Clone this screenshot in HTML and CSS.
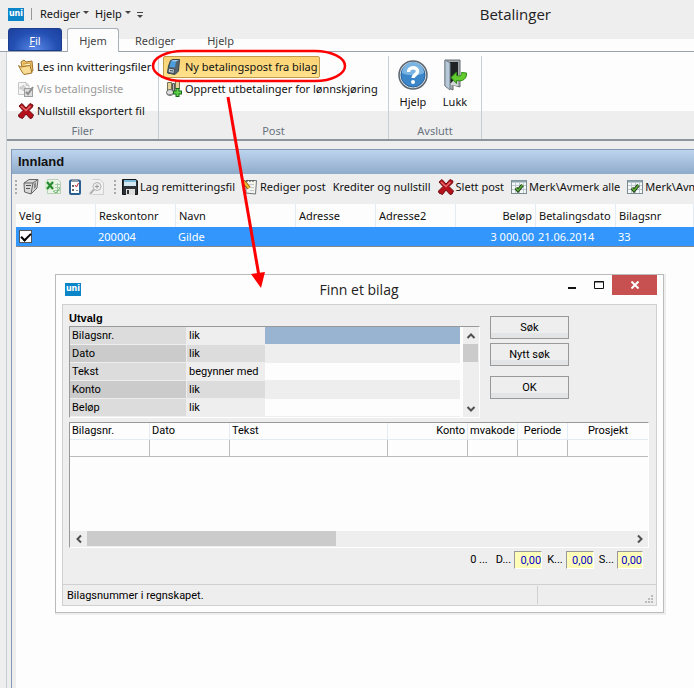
FILE: index.html
```
<!DOCTYPE html>
<html lang="no">
<head>
  <meta charset="UTF-8" />
  <meta name="viewport" content="width=device-width, initial-scale=1.0" />
  <title>Betalinger</title>
  <link rel="stylesheet" href="styles.css">
</head>
<body>

  <svg class="symbols" width="0" height="0" aria-hidden="true">
    <symbol id="cross" viewBox="0 0 16 16">
      <path d="M1 3 L4 0.500 L8 5 L12 0.500 L15 2 L14.500 4 L11 7.500 L15.500 12 L14 15 L12 15.500 L8 11 L4.500 15.500 L1 14 L0.500 12 L5 7.500 Z" fill="#b5121b" stroke="#6d0d12" />
      <path d="M3 3 L8 7.500 L12.500 3" fill="none" stroke="#e4696d" stroke-width="1.500" />
    </symbol>
    <symbol id="checkgrid" viewBox="0 0 16 14">
      <rect x="0.500" y="0.500" width="15" height="13" fill="#f6f8f8" stroke="#7d8c90" />
      <path d="M1 1.500H15" stroke="#8aa3ad" stroke-width="2" />
      <path d="M4.500 3V13M8.500 3V13M12.500 3V13M1 5.500H15M1 9.500H15" stroke="#b9c9cf" />
      <path d="M5 8 L7 10.500 L11.500 5" fill="none" stroke="#1d3a14" stroke-width="3.500" />
      <path d="M5 8 L7 10.500 L11.500 5" fill="none" stroke="#5fae3a" stroke-width="1.500" />
    </symbol>
  </svg>

  <header class="titlebar">
    <span class="logo">uni</span>
    <nav class="quick">
      <button>Rediger <i class="caret"></i></button>
      <button>Hjelp <i class="caret"></i></button>
      <button aria-label="Tilpass"><i class="caret more"></i></button>
    </nav>
    <h1>Betalinger</h1>
  </header>

  <nav class="tabs">
    <button class="tab file"><u>F</u>il</button>
    <button class="tab active">Hjem</button>
    <button class="tab">Rediger</button>
    <button class="tab">Hjelp</button>
  </nav>

  <main class="window">
    <div class="ribbon">
      <section class="group filer">
        <div class="tools">
          <button class="tool">
            <svg width="16" height="16" viewBox="0 0 16 16"><path d="M3 3 L6 1 L8 3 L14 2 L15 12 L5 13 Z" fill="#f0c469" stroke="#a0752b" /><path d="M5 5 L12 4 L13 7" fill="#fff4cf" stroke="#c99a42" /><path d="M0.500 6.500 L3 8 L12 6.500 L14 14 L6 15.500 L4 13 Z" fill="#f9dc93" stroke="#a0752b" /></svg>
            Les inn kvitteringsfiler
          </button>
          <button class="tool" disabled>
            <svg width="16" height="16" viewBox="0 0 16 16"><path d="M0.500 1.500H8L11 4.500V13.500H0.500Z" fill="#f5f5f5" stroke="#c6c6c6" /><path d="M8 1.500V4.500H11M5 4L8 7L5 10V8H2V6H5Z" fill="#d8d8d8" stroke="#c6c6c6" /><rect x="6.500" y="7.500" width="8" height="8" fill="#dcdcdc" stroke="#9d9d9d" /><path d="M8 11L10 13L15 6" fill="none" stroke="#8d8d8d" stroke-width="2" /></svg>
            Vis betalingsliste
          </button>
          <button class="tool">
            <svg width="16" height="16"><use href="#cross" /></svg>
            Nullstill eksportert fil
          </button>
        </div>
        <h2>Filer</h2>
      </section>

      <section class="group post">
        <div class="tools">
          <button class="tool selected">
            <svg width="16" height="16" viewBox="0 0 16 16"><path d="M4.500 1.500L7 0.500H13.500L12.500 12L9 15.500L1.500 14L2.500 7Z" fill="#55636e" stroke="#37434d" /><path d="M5 2H10L9 8.500L3.500 8Z" fill="#4a9fdc" /><path d="M5 2L7 1H13L10 2.500Z" fill="#a9cde8" /><path d="M2.500 9L8.500 10L8 14.500L2 13.500Z" fill="#c3ccd2" stroke="#3c4a55" /><path d="M4 11.500L7 12" stroke="#3c4a55" /></svg>
            Ny betalingspost fra bilag
          </button>
          <button class="tool">
            <svg width="16" height="16" viewBox="0 0 16 16"><path d="M1.500 1.500H5.500V10H1.500ZM9.500 0.500H13.500V8H9.500Z" fill="#e5d59a" stroke="#77704f" /><path d="M6.500 2.500H8.500V11H6.500Z" fill="#b9b9b9" stroke="#555" /><ellipse cx="4" cy="11.500" rx="3.500" ry="3" fill="#dedede" stroke="#666" /><path d="M1 12.500C2 14 6 14 7 12.500" fill="none" stroke="#888" /><path d="M11.500 7V16M7 11.500H16" stroke="#16691a" stroke-width="4" /><path d="M11.500 8V15M8 11.500H15" stroke="#5ed14b" stroke-width="2" /></svg>
            Opprett utbetalinger for lønnskjøring
          </button>
        </div>
        <h2>Post</h2>
      </section>

      <section class="group avslutt">
        <div class="tools large">
          <button class="tool">
            <svg width="32" height="32" viewBox="0 0 32 32"><circle cx="16" cy="16" r="14" fill="#d7dde2" stroke="#5d666e" stroke-width="1.500" /><circle cx="16" cy="16" r="12" fill="#3a86c8" stroke="#2b659c" /><path d="M5 14A11 11 0 0 1 27 14C21 17 11 17 5 14Z" fill="#79b4e2" /><path d="M11.500 13C11.500 7.500 20.500 7.500 20.500 12.500C20.500 16 16 15.500 16 19" fill="none" stroke="#fff" stroke-width="3.500" /><circle cx="16" cy="23" r="2" fill="#fff" /></svg>
            Hjelp
          </button>
          <button class="tool">
            <svg width="32" height="32" viewBox="0 0 32 32"><path d="M6 1H21V28L14 26V31L6 27Z" fill="#a4a9ad" stroke="#666c71" /><path d="M11 3H19V24H11Z" fill="#202326" /><path d="M12 24L19 17V27L12 26Z" fill="#d3d6d8" /><path d="M6 1L11 4V31L6 27Z" fill="#b7c9d8" stroke="#74818c" /><path d="M12 18.500L17.500 13V16.500C20 17.500 23 17 22.500 13.500L27.500 14C28 19.500 24 23 17.500 21.500V24.500Z" fill="#62c92e" stroke="#2e8b13" /></svg>
            Lukk
          </button>
        </div>
        <h2>Avslutt</h2>
      </section>
    </div>

    <section class="panel">
      <h2 class="panel-title">Innland</h2>

      <div class="toolbar">
        <i class="grip"></i>
        <button class="tbtn icon" aria-label="Skriv ut"><svg width="16" height="16" viewBox="0 0 16 16"><path d="M1 4L6 0.500H15L14 9L8 15L1.500 13Z" fill="#d8d8d8" stroke="#666" /><path d="M1 4H10L15 0.500M10 4L8 15" fill="none" stroke="#666" /><path d="M3 6.500H8M3 9.500H7" stroke="#555" /><path d="M11 5L13 3V8L11 10Z" fill="#888" /></svg></button>
        <button class="tbtn icon" aria-label="Excel"><svg width="16" height="16" viewBox="0 0 16 16"><path d="M2.500 0.500H13L15.500 3V14.500H2.500Z" fill="#eaf5e8" stroke="#b5d0b5" /><path d="M10 5.500H15M10 8.500H15M9 11.500H15M12.500 4V14" stroke="#a5cda5" /><rect x="0" y="2" width="9" height="9" fill="#d4ecd0" /><path d="M2 3L8 10M8 3L2 10" stroke="#23872b" stroke-width="2" /><path d="M8 12L11 14L15 9" fill="none" stroke="#63b263" /></svg></button>
        <button class="tbtn icon" aria-label="Liste"><svg width="16" height="16" viewBox="0 0 16 16"><rect x="3" y="1.500" width="10" height="13.500" rx="1" fill="#fff" stroke="#2a6093" stroke-width="2" /><rect x="5" y="0" width="6" height="3" fill="#8b9ca8" /><path d="M5 7H7M5 11H7" stroke="#666" stroke-width="2" /><path d="M8 6L9.500 8L11.500 4" fill="none" stroke="#b52626" /><path d="M9 11.500H11" stroke="#888" /></svg></button>
        <button class="tbtn icon" aria-label="Forhåndsvis"><svg width="16" height="16" viewBox="0 0 16 16"><path d="M3.500 0.500H11L14.500 4V15.500H3.500" fill="#f1f1f1" stroke="#cfcfcf" /><circle cx="8" cy="7.500" r="4" fill="#eee" stroke="#b2b2b2" /><path d="M8 5.500V9.500M6 7.500H10" stroke="#999" /><path d="M5 10.500L1 15" stroke="#b2b2b2" stroke-width="2" /></svg></button>
        <i class="grip second"></i>
        <button class="tbtn"><svg width="16" height="16" viewBox="0 0 16 16"><path d="M0.500 0.500H14L15.500 2V15.500H0.500Z" fill="#2d3136" stroke="#15181b" /><rect x="2" y="1" width="12" height="6" fill="#d5e7f1" /><path d="M2 2H14" stroke="#79bada" stroke-width="2" /><rect x="4" y="10" width="9" height="6" fill="#e0e0e0" /><rect x="5" y="11" width="2" height="4" fill="#333" /></svg>Lag remitteringsfil</button>
        <button class="tbtn gap"><svg width="16" height="16" viewBox="0 0 16 16"><path d="M4 1.500H14.500L13.500 15L4 14Z" fill="#f4f4ec" stroke="#6d7478" /><path d="M5 1V3M8 1V3M11 1V3" stroke="#444" /><path d="M7 5.500H12M8 8.500H12M8 11.500H12" stroke="#c3c9cc" /><path d="M1 2L7 9" stroke="#8a6414" stroke-width="4" /><path d="M1 2L7 9" stroke="#f4bd32" stroke-width="2" /></svg>Rediger post</button>
        <button class="tbtn gap">Krediter og nullstill</button>
        <button class="tbtn gap"><svg width="16" height="16"><use href="#cross" /></svg>Slett post</button>
        <button class="tbtn gap"><svg width="16" height="14"><use href="#checkgrid" /></svg>Merk\Avmerk alle</button>
        <button class="tbtn gap"><svg width="16" height="14"><use href="#checkgrid" /></svg>Merk\Avmerk</button>
      </div>

      <div class="list">
        <table class="payments">
          <colgroup>
            <col class="w80"><col class="w80"><col class="w120"><col class="w80"><col class="w80"><col class="w80"><col class="w80"><col>
          </colgroup>
          <thead>
            <tr><th>Velg</th><th>Reskontonr</th><th>Navn</th><th>Adresse</th><th>Adresse2</th><th class="num">Beløp</th><th>Betalingsdato</th><th>Bilagsnr</th></tr>
          </thead>
          <tbody>
            <tr><td><input type="checkbox" aria-label="Velg" checked></td><td>200004</td><td>Gilde</td><td></td><td></td><td class="num">3 000,00</td><td>21.06.2014</td><td>33</td></tr>
          </tbody>
        </table>
      </div>
    </section>
  </main>

  <div class="dialog" role="dialog" aria-labelledby="dialogTitle">
    <div class="dialog-bar">
      <span class="logo">uni</span>
      <h2 id="dialogTitle">Finn et bilag</h2>
      <div class="winbtns">
        <button aria-label="Minimer"><svg width="12" height="12" viewBox="0 0 12 12"><path d="M2 9H10" stroke="#111" stroke-width="2" /></svg></button>
        <button aria-label="Maksimer"><svg width="12" height="12" viewBox="0 0 12 12"><path d="M1.500 2.500H10.500V9.500H1.500Z M1 3H11" fill="none" stroke="#111" /></svg></button>
        <button class="close" aria-label="Lukk"><svg width="8" height="8" viewBox="0 0 8 8"><path d="M0.500 0.500L7.500 7.500M7.500 0.500L0.500 7.500" stroke="#fff" stroke-width="2" /></svg></button>
      </div>
    </div>

    <div class="dialog-body">
      <div class="search">
        <div class="criteria">
          <h3>Utvalg</h3>
          <div class="criteria-box">
            <table class="filters">
              <tr><th><label for="bilagsnr">Bilagsnr.</label></th><td>lik</td><td><input id="bilagsnr" class="current"></td></tr>
              <tr><th><label for="dato">Dato</label></th><td>lik</td><td><input id="dato"></td></tr>
              <tr><th><label for="tekst">Tekst</label></th><td>begynner med</td><td><input id="tekst"></td></tr>
              <tr><th><label for="konto">Konto</label></th><td>lik</td><td><input id="konto"></td></tr>
              <tr><th><label for="belop">Beløp</label></th><td>lik</td><td><input id="belop"></td></tr>
            </table>
            <div class="scroll vertical">
              <button aria-label="Opp"><svg width="10" height="8" viewBox="0 0 10 8"><path d="M1.500 6L5 2.500L8.500 6" /></svg></button>
              <i class="thumb"></i>
              <button aria-label="Ned"><svg width="10" height="8" viewBox="0 0 10 8"><path d="M1.500 2L5 5.500L8.500 2" /></svg></button>
            </div>
          </div>
        </div>
        <div class="actions">
          <button>Søk</button>
          <button>Nytt søk</button>
          <button class="ok">OK</button>
        </div>
      </div>

      <div class="hits">
        <table>
          <colgroup>
            <col class="w80"><col class="w80"><col><col class="w80"><col class="w50"><col class="w50"><col class="w80">
          </colgroup>
          <thead>
            <tr><th>Bilagsnr.</th><th>Dato</th><th>Tekst</th><th class="num">Konto</th><th class="mid">mvakode</th><th class="mid">Periode</th><th class="mid">Prosjekt</th></tr>
          </thead>
          <tbody>
            <tr><td></td><td></td><td></td><td></td><td></td><td></td><td></td></tr>
          </tbody>
        </table>
        <div class="scroll horizontal">
          <button aria-label="Venstre"><svg width="8" height="10" viewBox="0 0 8 10"><path d="M6 1.500L2.500 5L6 8.500" /></svg></button>
          <i class="thumb"></i>
          <button aria-label="Høyre"><svg width="8" height="10" viewBox="0 0 8 10"><path d="M2 1.500L5.500 5L2 8.500" /></svg></button>
        </div>
      </div>

      <div class="sums">
        <span>0 ...</span>
        <label for="debet">D...</label><input id="debet" value="0,00" readonly>
        <label for="kredit">K...</label><input id="kredit" value="0,00" readonly>
        <label for="saldo">S...</label><input id="saldo" class="small" value="0,00" readonly>
      </div>

      <footer class="status">
        <span>Bilagsnummer i regnskapet.</span>
        <span class="corner"><svg width="9" height="9" viewBox="0 0 9 9" fill="#bbb"><path d="M6 0h2v2h-2zM3 3h2v2h-2zM6 3h2v2h-2zM0 6h2v2h-2zM3 6h2v2h-2zM6 6h2v2h-2z" /></svg></span>
      </footer>
    </div>
  </div>

  <svg class="marker" width="240" height="250" viewBox="0 0 240 250" aria-hidden="true">
    <rect x="43" y="11" width="192" height="30" rx="30" ry="15" fill="none" stroke="#f00" stroke-width="2.500" />
    <path d="M118 57L149 236" stroke="#f00" stroke-width="3" />
    <path d="M141 234L155 232L151 248Z" fill="#f00" />
  </svg>

</body>
</html>
```

FILE: styles.css
```
* {
  box-sizing: border-box;
}

body {
  margin: 0;
  min-height: 100vh;
  display: flex;
  flex-direction: column;
  background-color: #eee;
  color: #111;
  font-family: "Noto Sans", "Open Sans", sans-serif;
  font-size: 11px;
  line-height: 16px;
  overflow: hidden;
  position: relative;
}

h1,
h2,
h3 {
  margin: 0;
  font-size: 11px;
  font-weight: normal;
}

button,
input {
  font: inherit;
  color: inherit;
  margin: 0;
}

button {
  padding: 0;
  border: none;
  background: none;
  white-space: nowrap;
}

svg {
  flex: none;
}

.symbols {
  position: absolute;
}

.logo {
  width: 16px;
  height: 13px;
  background-color: #0a85c7;
  color: #fff;
  font: bold 8px/12px "DejaVu Sans", sans-serif;
  display: flex;
  justify-content: center;
  overflow: hidden;
}

/* title bar and tabs */

.titlebar {
  display: flex;
  align-items: center;
  height: 28px;
  padding-left: 8px;
}

.quick {
  display: flex;
  gap: 6px;
  margin-left: 7px;
  padding-left: 8px;
  border-left: 1px solid #999;
  height: 12px;
  align-items: center;
}

.caret {
  display: inline-block;
  border: 3px solid transparent;
  border-top-color: #444;
  border-bottom: none;
  vertical-align: 4px;
}

.more {
  vertical-align: 0;
  box-shadow: 0 -2px #eee, 0 -3px #444;
}

.titlebar h1 {
  flex: 1;
  padding-left: 194px;
  text-align: center;
  font-family: "Open Sans", sans-serif;
  font-size: 15px;
}

.titlebar h1,
.dialog-bar h2 {
  color: #222;
}

.tabs {
  display: flex;
  height: 24px;
  padding-left: 8px;
  background: linear-gradient(#eee 11px, #fdfdfd 11px);
  border-bottom: 1px solid #9aa3ad;
}

.tab {
  padding: 2px 16px 0;
  color: #444;
}

.file {
  width: 54px;
  margin-right: 5px;
  border: 1px solid #1c3c8c;
  border-radius: 3px 3px 0 0;
  background: radial-gradient(ellipse at 50% 100%, #5b8be8, #2450b4 60%, #1c3f9c);
  color: #fff;
}

.active {
  width: 52px;
  padding: 1px 0 0;
  margin-bottom: -1px;
  border: 1px solid #a9b0b8;
  border-bottom: none;
  border-radius: 3px 3px 0 0;
  background-color: #fdfdfd;
}

/* ribbon */

.window {
  flex: 1;
  display: flex;
  flex-direction: column;
  margin-left: 6px;
  border-left: 1px solid #c9ced4;
}

.ribbon {
  display: flex;
  height: 89px;
  background: linear-gradient(#fdfdfd 59px, #eee 59px);
  border-bottom: 2px solid #8d949c;
}

.group {
  display: flex;
  flex-direction: column;
  justify-content: space-between;
  margin-top: 4px;
  border-right: 1px solid #c9ced6;
}

.group h2 {
  color: #68737f;
  text-align: center;
}

.filer {
  width: 152px;
}

.post {
  width: 230px;
}

.avslutt {
  width: 93px;
}

.tools {
  padding-left: 9px;
}

.post .tools {
  padding-left: 4px;
}

.tool {
  display: flex;
  align-items: center;
  gap: 3px;
  height: 22px;
  padding: 0 2px;
}

.post .tool {
  border: 1px solid transparent;
}

.tool:disabled {
  color: #999;
}

.post .selected {
  border-color: #c29b4a;
  border-radius: 2px;
  background: linear-gradient(#fbd273, #ffe28d);
}

.tools.large {
  display: flex;
  gap: 6px;
  padding: 3px 6px 0;
}

.large .tool {
  flex-direction: column;
  height: 52px;
}

/* payment list */

.panel {
  flex: 1;
  display: flex;
  flex-direction: column;
  min-width: 0;
  margin: 8px 0 0 4px;
  border-left: 1px solid #8399b3;
  border-top: 1px solid #8399b3;
}

.panel-title {
  padding: 0 6px;
  background: linear-gradient(#bdd4ee, #8fabca);
  font: bold 13px/24px "Liberation Sans", sans-serif;
}

.toolbar {
  display: flex;
  align-items: center;
  height: 30px;
  padding: 0 3px 4px;
  overflow: hidden;
}

.grip {
  flex: none;
  width: 2px;
  height: 14px;
  margin-right: 6px;
  background: repeating-linear-gradient(#aaa 0 2px, #eee 2px 4px);
}

.second {
  margin-left: 3px;
}

.tbtn {
  display: flex;
  align-items: center;
  flex: none;
  gap: 2px;
}

.icon {
  margin-right: 6px;
}

.gap {
  margin-left: 7px;
}

.list {
  flex: 1;
  margin-left: 4px;
  background-color: #fdfdfd;
}

table {
  width: 100%;
  table-layout: fixed;
  border-spacing: 0;
}

th,
td {
  padding: 0 2px;
  text-align: left;
  font-weight: normal;
  white-space: nowrap;
}

.w80 {
  width: 80px;
}

.w120 {
  width: 120px;
}

.w50 {
  width: 50px;
}

.num {
  text-align: right;
}

.mid {
  text-align: center;
}

.payments th {
  height: 23px;
  padding: 0 3px;
  border-right: 1px solid #e3ebf5;
}

.payments td {
  height: 20px;
  background-color: #3296fd;
  border-bottom: 1px solid #888;
  color: #fff;
}

.payments td:first-child {
  padding-left: 3px;
}

.payments input {
  appearance: none;
  display: block;
  width: 13px;
  height: 13px;
  border: 1px solid #555;
  background-color: #fff;
}

.payments input:checked::before {
  content: "";
  display: block;
  width: 8px;
  height: 4px;
  margin: 2px 1px;
  border: solid #000;
  border-width: 0 0 2px 2px;
  transform: rotate(-45deg);
}

/* dialog window */

.dialog {
  position: absolute;
  top: 274px;
  left: 55px;
  right: 30px;
  padding: 0 6px 6px;
  border: 1px solid #bbb;
  background-color: #fdfdfd;
  box-shadow: 1px 1px 0 1px #eee;
  color: #000;
  font-family: Roboto, sans-serif;
}

.dialog-bar {
  display: flex;
  align-items: center;
  height: 29px;
  padding-left: 3px;
}

.dialog-bar h2 {
  flex: 1;
  padding-left: 79px;
  font: 14px/20px "Open Sans", sans-serif;
  text-align: center;
}

.winbtns {
  display: flex;
  align-self: flex-start;
}

.winbtns button {
  display: flex;
  align-items: center;
  justify-content: center;
  width: 27px;
  height: 20px;
}

.winbtns .close {
  width: 45px;
  background-color: #c75050;
}

.dialog-body {
  border: 1px solid #d0d0d0;
  background-color: #eee;
}

.search {
  display: flex;
  gap: 10px;
  padding: 6px 0 0 6px;
}

.criteria {
  flex: 0 1 411px;
}

.criteria h3 {
  font: bold 11px/15px "Liberation Sans", sans-serif;
}

.criteria-box {
  display: flex;
  gap: 3px;
  border: 1px solid #999;
  border-right-color: #fff;
  border-bottom-color: #fff;
  background-color: #fdfdfd;
}

.filters {
  flex: 1;
}

.filters th,
.filters td {
  height: 18px;
  border-bottom: 1px solid #eee;
  line-height: 17px;
}

.filters th {
  width: 117px;
  background-color: #dcdcdc;
  border-right: 1px solid #eee;
}

.filters td {
  width: 78px;
  background-color: #eee;
}

.filters td:last-child {
  width: auto;
  padding: 0;
  background-color: #fdfdfd;
}

.filters tr:nth-child(even) th {
  background-color: #cbcbcb;
}

.filters tr:nth-child(even) td {
  background-color: #dcdcdc;
}

.filters tr:nth-child(even) td:last-child {
  background-color: #eee;
}

.filters input {
  display: block;
  width: 100%;
  height: 17px;
  padding: 0 2px;
  border: none;
  background: none;
}

.filters .current {
  background-color: #99b4d1;
}

.scroll {
  display: flex;
  background-color: #eee;
}

.scroll button {
  display: flex;
  align-items: center;
  justify-content: center;
  width: 17px;
  height: 17px;
}

.scroll path {
  fill: none;
  stroke: #505050;
  stroke-width: 2;
}

.vertical {
  flex-direction: column;
  width: 16px;
  padding-right: 1px;
}

.vertical button {
  width: 15px;
}

.vertical button:last-child,
.horizontal button:last-child {
  margin-top: auto;
  margin-left: auto;
}

.thumb {
  background-color: #cbcbcb;
}

.vertical .thumb {
  height: 18px;
}

.horizontal {
  height: 16px;
  padding-bottom: 1px;
}

.horizontal button {
  height: 15px;
}

.horizontal .thumb {
  width: 43%;
}

.actions {
  display: flex;
  flex-direction: column;
  gap: 4px;
  padding-top: 5px;
}

.actions button {
  width: 79px;
  height: 23px;
  border: 1px solid #999;
  background: linear-gradient(#eee 16px, #e2e4e6 16px);
}

.actions .ok {
  margin-top: 6px;
}

.hits {
  display: flex;
  flex-direction: column;
  justify-content: space-between;
  height: 126px;
  margin: 4px 7px 0 6px;
  border: 1px solid #999;
  border-right-color: #fff;
  border-bottom-color: #fff;
  background-color: #fdfdfd;
}

.hits th {
  height: 17px;
  border-right: 1px solid #e3ebf5;
  border-bottom: 1px solid #e3ebf5;
}

.hits .mid {
  padding: 0;
}

.hits td {
  height: 17px;
  border-right: 1px solid #bbb;
  border-bottom: 1px solid #bbb;
}

.hits th:last-child,
.hits td:last-child {
  border-right: none;
}

.sums {
  display: flex;
  justify-content: flex-end;
  align-items: center;
  gap: 3px;
  padding: 3px 13px 15px 0;
}

.sums span {
  margin-right: 5px;
}

.sums input + label {
  margin-left: 2px;
}

.sums input {
  width: 28px;
  height: 18px;
  padding: 0;
  border: 1px solid #999;
  border-right-color: #fff;
  border-bottom-color: #fff;
  background-color: #fffdb8;
  color: #00c;
  text-align: right;
}

.sums .small {
  width: 26px;
}

.status {
  display: flex;
  justify-content: space-between;
  height: 21px;
  padding: 1px 2px 1px 4px;
  border-top: 1px solid #d0d0d0;
  line-height: 20px;
}

.corner {
  display: flex;
  justify-content: flex-end;
  align-items: flex-end;
  width: 117px;
  border-left: 1px solid #d0d0d0;
}

/* red ring and arrow drawn over the windows */

.marker {
  position: absolute;
  left: 110px;
  top: 40px;
  fill: none;
  pointer-events: none;
}
```
